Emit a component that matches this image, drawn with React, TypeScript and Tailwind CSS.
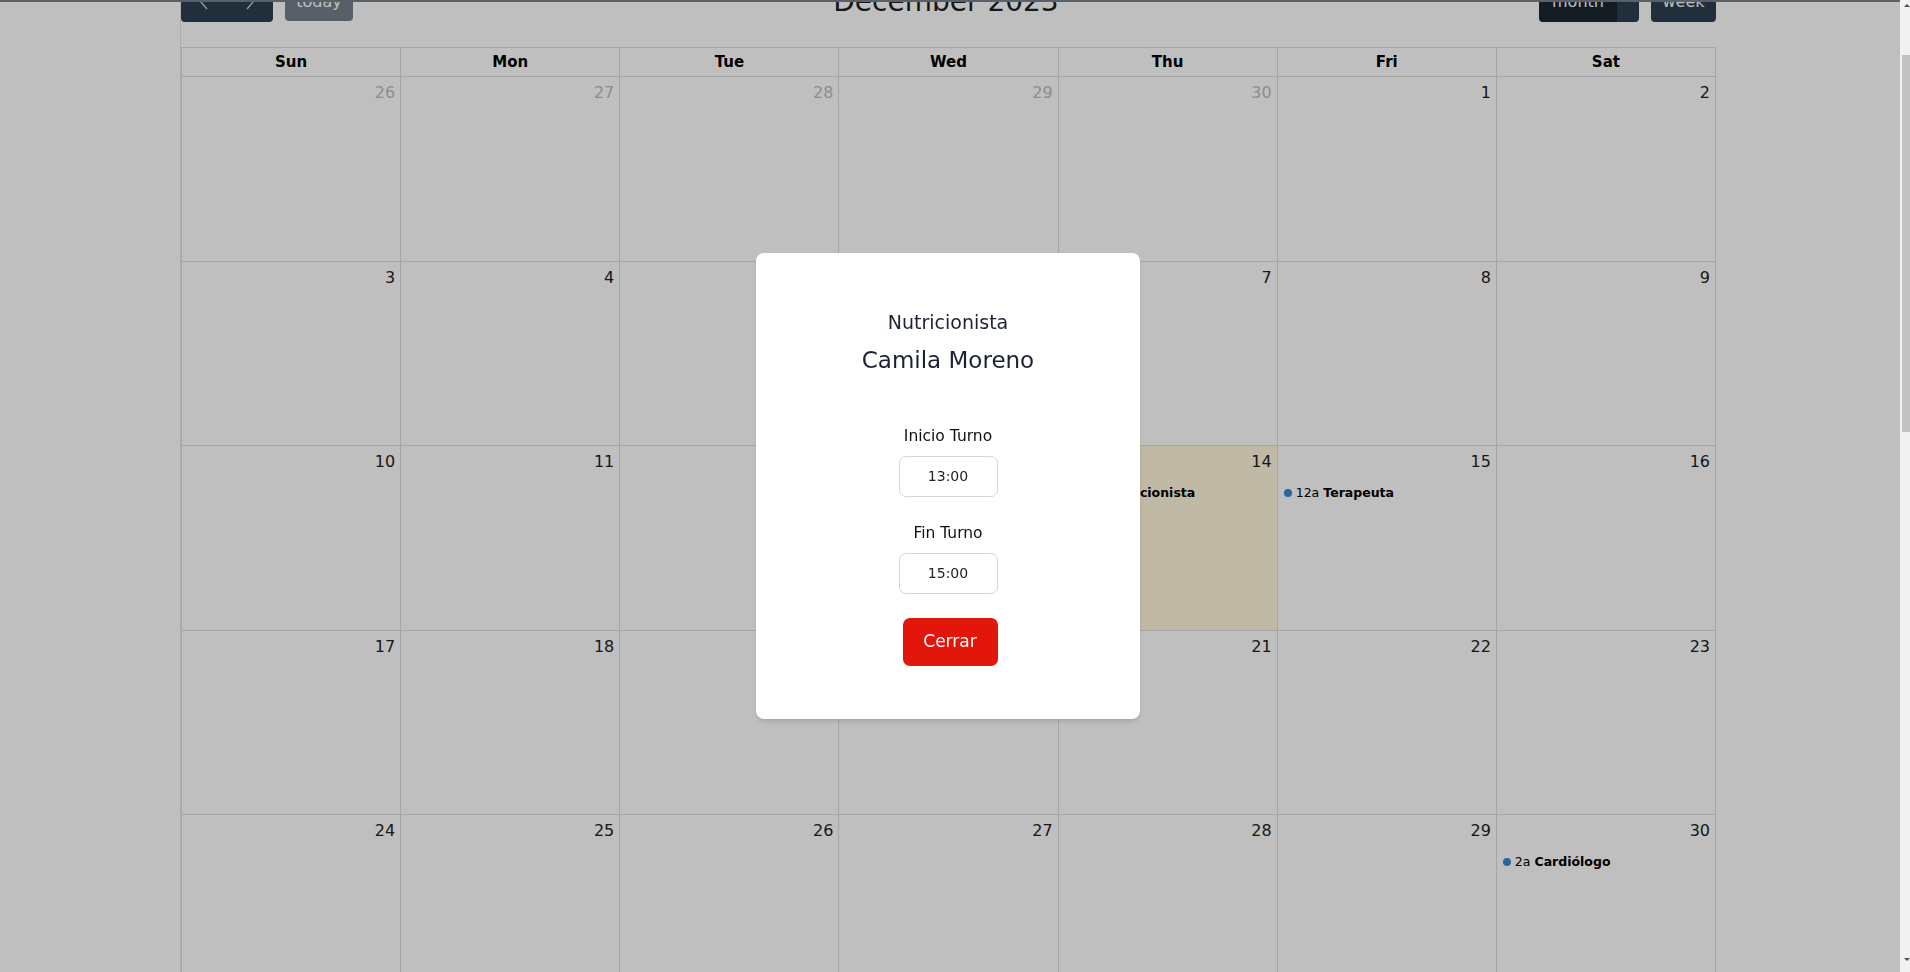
import React from 'react';

type Day = { n: number; other?: boolean; today?: boolean; event?: { time: string; title: string } };

const dayNames = ['Sun', 'Mon', 'Tue', 'Wed', 'Thu', 'Fri', 'Sat'];

const weeks: Day[][] = [
  [{ n: 26, other: true }, { n: 27, other: true }, { n: 28, other: true }, { n: 29, other: true }, { n: 30, other: true }, { n: 1 }, { n: 2 }],
  [{ n: 3 }, { n: 4 }, { n: 5 }, { n: 6 }, { n: 7 }, { n: 8 }, { n: 9 }],
  [
    { n: 10 },
    { n: 11 },
    { n: 12 },
    { n: 13 },
    { n: 14, today: true, event: { time: '12a', title: 'Nutricionista' } },
    { n: 15, event: { time: '12a', title: 'Terapeuta' } },
    { n: 16 },
  ],
  [{ n: 17 }, { n: 18 }, { n: 19 }, { n: 20 }, { n: 21 }, { n: 22 }, { n: 23 }],
  [{ n: 24 }, { n: 25 }, { n: 26 }, { n: 27 }, { n: 28 }, { n: 29 }, { n: 30, event: { time: '2a', title: 'Cardiólogo' } }],
  [{ n: 31 }, { n: 1, other: true }, { n: 2, other: true }, { n: 3, other: true }, { n: 4, other: true }, { n: 5, other: true }, { n: 6, other: true }],
];

const font = { fontFamily: '"DejaVu Sans", "Open Sans", sans-serif' };

function Toolbar() {
  return (
    <div className="flex items-center justify-between h-[40px] -mt-[20px] mb-[25px]">
      <div className="flex items-center gap-[12px]">
        <div className="flex h-[40px] w-[92px] rounded-[4px] bg-[#2c3e50] text-white">
          <button className="flex-1 flex items-center justify-center">
            <svg width="12" height="18" viewBox="0 0 12 18" fill="none" stroke="#b9c6d3" strokeWidth="1.5">
              <path d="M9 2 L3 9 L9 16" />
            </svg>
          </button>
          <button className="flex-1 flex items-center justify-center">
            <svg width="12" height="18" viewBox="0 0 12 18" fill="none" stroke="#b9c6d3" strokeWidth="1.5">
              <path d="M3 2 L9 9 L3 16" />
            </svg>
          </button>
        </div>
        <button className="h-[39px] w-[68px] rounded-[4px] bg-[#2c3e50] opacity-65 text-white text-[16px] self-start">today</button>
      </div>
      <h2 className="text-[28px] text-[#1f1f1f] font-normal">December 2023</h2>
      <div className="flex items-center gap-[12px]">
        <div className="flex h-[40px] w-[100px] rounded-[4px] overflow-hidden text-white text-[16px]">
          <button className="w-[78px] bg-[#1a252f]">month</button>
          <div className="flex-1 bg-[#2c3e50]" />
        </div>
        <button className="h-[40px] w-[65px] rounded-[4px] bg-[#2c3e50] text-white text-[16px]">week</button>
      </div>
    </div>
  );
}

function Cell({ d }: { d: Day }) {
  return (
    <div className={`h-[184.5px] border-r border-b border-[#dddddd] ${d.today ? 'bg-[#fff7dc]' : ''}`}>
      <div className={`h-[37px] text-right pr-[5px] pt-[4px] text-[16px] leading-[24px] ${d.other ? 'text-[#bcbcbc]' : 'text-[#222]'}`}>
        {d.n}
      </div>
      {d.event && (
        <div className="flex items-center h-[20px] text-[12.5px] text-black whitespace-nowrap">
          <span className="ml-[6px] mr-[4px] w-[8px] h-[8px] rounded-full bg-[#3788d8]" />
          <span className="mr-[4px]">{d.event.time}</span>
          <span className="font-bold">{d.event.title}</span>
        </div>
      )}
    </div>
  );
}

function Calendar() {
  return (
    <div className="ml-[180px] w-[1536px] border-l border-[#e9e9e9]">
      <Toolbar />
      <div className="border-t border-l border-[#dddddd]">
        <div className="grid grid-cols-7">
          {dayNames.map((n) => (
            <div key={n} className="h-[29px] border-r border-b border-[#dddddd] flex items-center justify-center text-[15px] font-bold text-black">
              {n}
            </div>
          ))}
        </div>
        {weeks.map((w, i) => (
          <div key={i} className="grid grid-cols-7">
            {w.map((d, j) => (
              <Cell key={j} d={d} />
            ))}
          </div>
        ))}
      </div>
    </div>
  );
}

function Scrollbar() {
  return (
    <div className="w-[10px] h-screen bg-[#f1f1f1] flex flex-col items-end">
      <div className="w-full h-[17px] flex justify-center pt-[4px] pl-[4px]">
        <div className="w-0 h-0 border-l-[3px] border-r-[3px] border-b-[3px] border-l-transparent border-r-transparent border-b-[#505050]" />
      </div>
      <div className="mt-[38px] w-[8px] h-[377px] bg-[#c1c1c1]" />
      <div className="flex-1" />
      <div className="w-full h-[14px] flex justify-center pl-[4px]">
        <div className="w-0 h-0 border-l-[3px] border-r-[3px] border-t-[3px] border-l-transparent border-r-transparent border-t-[#505050]" />
      </div>
    </div>
  );
}

function Modal() {
  return (
    <div className="fixed top-0 left-0 bottom-0 w-[1900px] bg-black/25 flex items-center justify-center pr-[4px]">
      <div className="w-[384px] h-[466px] bg-white rounded-[8px] shadow-md flex flex-col items-center pt-[55px]">
        <p className="text-[19px] leading-[28px] text-[#1b2233]">Nutricionista</p>
        <p className="text-[23px] leading-[32px] mt-[8px] text-[#1b2233]">Camila Moreno</p>
        <p className="text-[15.5px] leading-[22px] mt-[49px] text-[#111]">Inicio Turno</p>
        <div className="mt-[9px] w-[99px] h-[41px] rounded-[7px] border border-[#d4d4dc] flex items-center justify-center text-[14px] text-[#222]">
          13:00
        </div>
        <p className="text-[15.5px] leading-[22px] mt-[25px] text-[#111]">Fin Turno</p>
        <div className="mt-[9px] w-[99px] h-[41px] rounded-[7px] border border-[#d4d4dc] flex items-center justify-center text-[14px] text-[#222]">
          15:00
        </div>
        <button className="mt-[24px] ml-[4px] w-[95px] h-[48px] rounded-[7px] bg-[#e3160c] text-white text-[17px]">Cerrar</button>
      </div>
    </div>
  );
}

export default function App() {
  return (
    <div className="flex h-screen overflow-hidden bg-white" style={font}>
      <div className="w-[1900px] h-screen overflow-hidden border-t-2 border-[#78808c]">
        <Calendar />
      </div>
      <Scrollbar />
      <Modal />
    </div>
  );
}
